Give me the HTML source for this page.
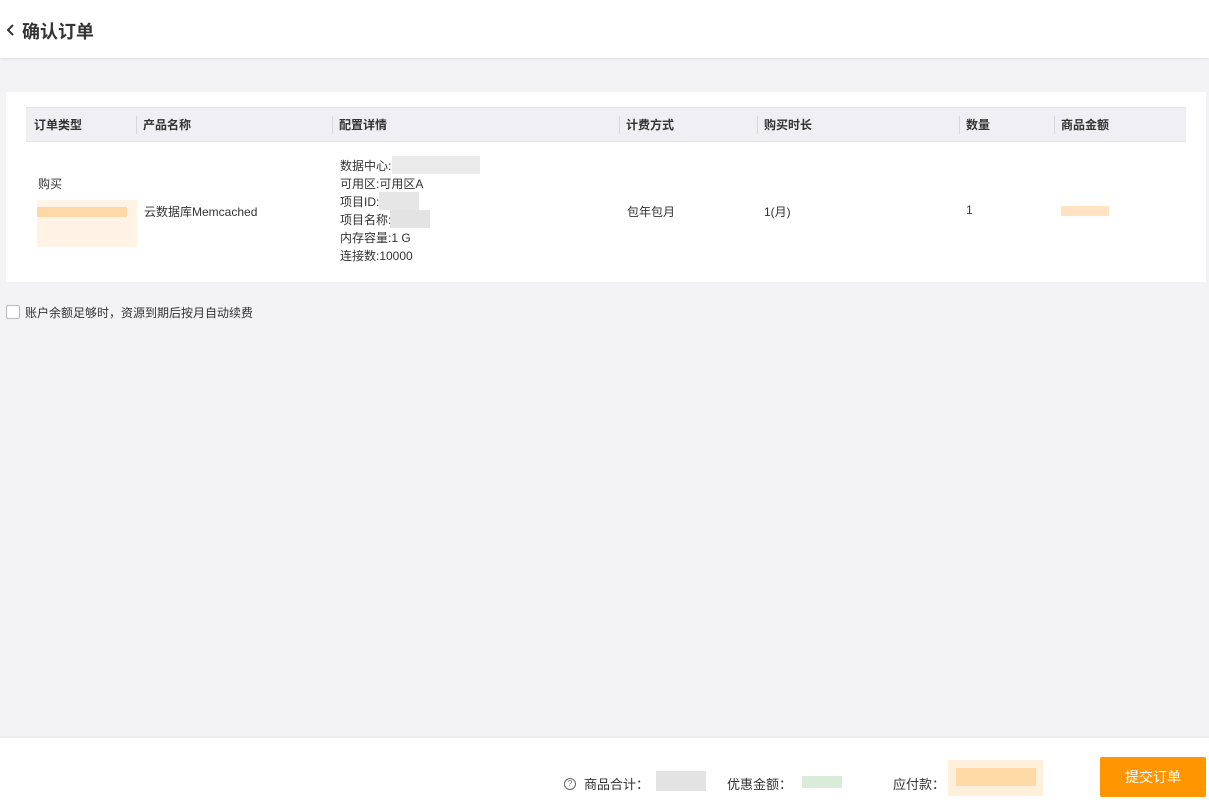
<!DOCTYPE html>
<html><head><meta charset="utf-8"><style>
body{margin:0;width:1209px;height:809px;background:#f3f3f5;font-family:"Liberation Sans","Noto Sans CJK SC",sans-serif;color:#333;position:relative;overflow:hidden}
.hdr{position:absolute;left:0;top:0;width:1209px;height:58px;background:#fff;box-shadow:0 1px 3px rgba(0,0,0,.08)}
.hdr .t{position:absolute;left:22px;top:18px;font-size:18px;font-weight:bold;color:#333}
.card{position:absolute;left:6px;top:92px;width:1200px;height:190px;background:#fff}
.th{position:absolute;left:20px;top:15px;width:1160px;height:33px;background:#f0f0f4;border-top:1px solid #e4e4ea;border-bottom:1px solid #e4e4ea;font-size:12px;font-weight:bold;color:#333}
.th span{position:absolute;top:8px}
.sep{position:absolute;top:8px;width:1px;height:18px;background:#d8d8dd}
.c{position:absolute;font-size:12px;color:#333}
.blk{position:absolute}
.foot{position:absolute;left:0;top:738px;width:1209px;height:71px;background:#fff;box-shadow:0 -1px 3px rgba(0,0,0,.05)}
.btn{position:absolute;left:1100px;top:19px;width:106px;height:40px;background:#ff9500;color:#fff;font-size:14px;line-height:40px;text-align:center;border-radius:2px}
</style></head><body>
<div class="hdr"><svg style="position:absolute;left:5px;top:23px" width="10" height="14"><path d="M8 2 L3 7 L8 12" stroke="#333" stroke-width="2" fill="none"/></svg><div class="t">确认订单</div></div>
<div class="card">
<div class="th">
<span style="left:8px">订单类型</span><div class="sep" style="left:110px"></div>
<span style="left:117px">产品名称</span><div class="sep" style="left:306px"></div>
<span style="left:313px">配置详情</span><div class="sep" style="left:593px"></div>
<span style="left:600px">计费方式</span><div class="sep" style="left:731px"></div>
<span style="left:738px">购买时长</span><div class="sep" style="left:933px"></div>
<span style="left:940px">数量</span><div class="sep" style="left:1028px"></div>
<span style="left:1035px">商品金额</span>
</div>
<div class="c" style="left:32px;top:83px">购买</div>
<div class="blk" style="left:31px;top:108px;width:100px;height:47px;background:#fff3e6"></div>
<div class="blk" style="left:31px;top:115px;width:90px;height:10px;background:#ffd8a8"></div>
<div class="c" style="left:138px;top:111px">云数据库Memcached</div>
<div class="c" style="left:334px;top:65px;line-height:18px">数据中心:<br>可用区:可用区A<br>项目ID:<br>项目名称:<br>内存容量:1 G<br>连接数:10000</div>
<div class="blk" style="left:386px;top:64px;width:88px;height:18px;background:#ebebeb"></div>
<div class="blk" style="left:373px;top:100px;width:40px;height:18px;background:#e6e6e6"></div>
<div class="blk" style="left:384px;top:118px;width:40px;height:18px;background:#e3e3e3"></div>
<div class="c" style="left:621px;top:111px">包年包月</div>
<div class="c" style="left:758px;top:111px">1(月)</div>
<div class="c" style="left:960px;top:111px">1</div>
<div class="blk" style="left:1055px;top:114px;width:48px;height:10px;background:#ffe3c2"></div>
</div>
<div style="position:absolute;left:6px;top:305px;width:12px;height:12px;border:1px solid #bbb;border-radius:2px;background:#fff"></div>
<div class="c" style="left:25px;top:304px">账户余额足够时，资源到期后按月自动续费</div>
<div class="foot">
<div style="position:absolute;left:564px;top:40px;width:10px;height:10px;border:1px solid #666;border-radius:50%;font-size:8px;text-align:center;line-height:10px;color:#666">?</div>
<div class="c" style="left:584px;top:36px;font-size:13px">商品合计：</div>
<div class="blk" style="left:656px;top:33px;width:50px;height:20px;background:#e3e3e3"></div>
<div class="c" style="left:727px;top:36px;font-size:13px">优惠金额：</div>
<div class="blk" style="left:802px;top:38px;width:40px;height:12px;background:#d9ebd9"></div>
<div class="c" style="left:893px;top:36px;font-size:13px">应付款：</div>
<div class="blk" style="left:948px;top:22px;width:95px;height:36px;background:#fff0dc"></div>
<div class="blk" style="left:956px;top:30px;width:80px;height:18px;background:#ffd9a6"></div>
<div class="btn">提交订单</div>
</div>
</body></html>
